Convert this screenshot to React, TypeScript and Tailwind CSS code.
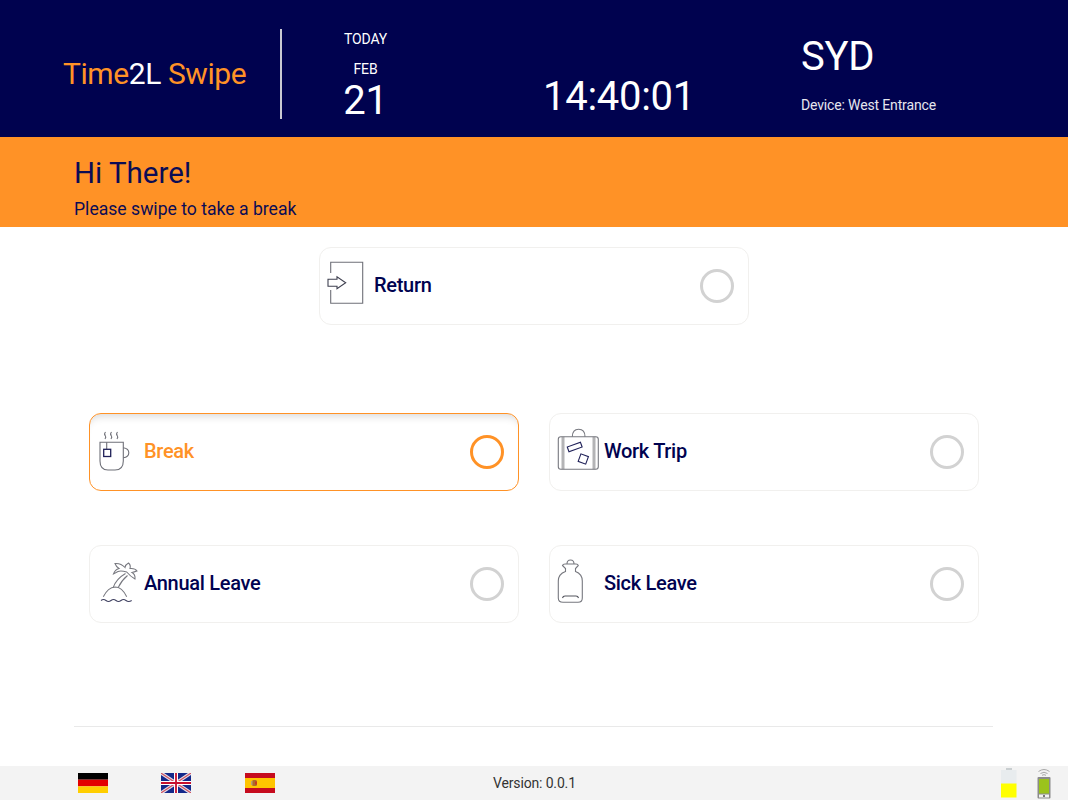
import React from "react";

function ReturnIcon() {
  return (
    <svg width="55" height="76" viewBox="0 0 55 76" fill="none" stroke="#6f7078" strokeWidth="1.1">
      <path d="M10.7 25V14.3H42.7V55.3H10.7V42" />
      <path d="M8 31.2H17V28.7L25.7 34.7L17 40.7V38.2H8Z" stroke="#3f4050" />
    </svg>
  );
}

function CupIcon() {
  return (
    <svg width="55" height="76" viewBox="0 0 55 76" fill="none" stroke="#6f7078" strokeWidth="1.1">
      <path d="M10 28.3H33.3V47Q33.3 56 25 56H18Q10 56 10 47Z" />
      <path d="M33.3 33.7Q38.8 34.5 38.8 38.7Q38.8 43 33.3 43.7" />
      <path d="M16.7 28.3V35.3" />
      <rect x="13.7" y="35.3" width="7" height="7.2" stroke="#1f2058" strokeWidth="1.3" />
      <path d="M15.5 18Q13.8 20 15.2 21.5Q16.5 23 15 25M21.5 18Q19.8 20 21.2 21.5Q22.5 23 21 25M27.5 18Q25.8 20 27.2 21.5Q28.5 23 27 25" />
    </svg>
  );
}

function CaseIcon() {
  return (
    <svg width="55" height="76" viewBox="0 0 55 76" fill="none" stroke="#77787f" strokeWidth="1.1">
      <path d="M13 22.7V55.3M44 22.7V55.3" stroke="#b4b4b6" strokeWidth="3" />
      <rect x="8.3" y="22.7" width="40" height="32.6" rx="2.5" />
      <path d="M22.3 22.7Q22.5 15.3 28.6 15.3Q35 15.3 35 22.7" />
      <rect x="17.7" y="30.5" width="14" height="5" transform="rotate(-20 24.7 33)" stroke="#1f2058" />
      <rect x="29.3" y="41" width="8" height="8" transform="rotate(20 33.3 45)" stroke="#1f2058" />
    </svg>
  );
}

function IslandIcon() {
  return (
    <svg width="55" height="76" viewBox="0 0 55 76" fill="none" stroke="#77787f" strokeWidth="1.05">
      <path d="M13.3 50.7Q18 41.5 25 41Q32 41 36.7 50.7" />
      <path d="M11 54.5Q13.5 52.5 16 54.5T21 54.5T26 54.5T31 54.5T36 54.5T41.7 54.5" stroke="#3f4060" />
      <path d="M23 41.8Q26 33 35.5 27.5M28.3 41.4Q31.5 34.5 37.5 29.5" />
      <path d="M36.7 26Q31 24.5 28 25.5L23.5 28Q25 23.5 29 22.5Q26 20.5 25 17.5Q31 17 35 21.5Q35.5 18.5 38.5 17Q41 19 40 22.5Q45 22 47 25Q44 26 42 26.5Q45.5 28.5 45 33Q40.5 30.5 36.7 26Z" />
    </svg>
  );
}

function BottleIcon() {
  return (
    <svg width="55" height="76" viewBox="0 0 55 76" fill="none" stroke="#77787f" strokeWidth="1.1">
      <path d="M15.5 25.5V22.5L12.5 19.5Q13 18 15 18H26Q28 18 28.3 19.5L25.5 22.5V25.5Q32.3 28 32.3 35V52Q32.3 56.3 28 56.3H13Q8.3 56.3 8.3 52V35Q8.3 28 15.5 25.5Z" />
      <path d="M17 18Q17 14 20.5 14Q24 14 24 18" />
      <path d="M12.5 52Q13 50 15 50H26Q28 50 28.5 52" stroke="#55565f" />
    </svg>
  );
}

function Card({ label, icon, active = false }: { label: string; icon: React.ReactNode; active?: boolean }) {
  return (
    <div
      className={`flex h-[78px] w-[430px] items-center rounded-xl border bg-white ${
        active
          ? "border-[#ff9226] shadow-[inset_0_9px_9px_-7px_rgba(0,0,0,0.16)]"
          : "border-[#f1f0ee]"
      }`}
    >
      <div className="h-[76px] w-[54px] shrink-0">{icon}</div>
      <span className={`-mt-[2px] text-[20px] font-medium tracking-[-0.3px] ${active ? "text-[#ff9226]" : "text-[#000250]"}`}>{label}</span>
      <div className={`-mt-px ml-auto mr-[14px] h-[34px] w-[34px] rounded-full border-[3px] ${active ? "border-[#ff9226]" : "border-[#d2d2d2]"}`} />
    </div>
  );
}

function Germany() {
  return (
    <svg width="30" height="20" viewBox="0 0 30 20">
      <rect width="30" height="6.67" fill="#000" />
      <rect y="6.67" width="30" height="6.67" fill="#e30000" />
      <rect y="13.33" width="30" height="6.67" fill="#ffce00" />
    </svg>
  );
}

function Britain() {
  return (
    <svg width="30" height="20" viewBox="0 0 30 20">
      <rect width="30" height="20" fill="#14288a" />
      <path d="M0 0L30 20M30 0L0 20" stroke="#e6e0ea" strokeWidth="3.4" />
      <path d="M0 0L30 20M30 0L0 20" stroke="#d0505e" strokeWidth="1.1" />
      <path d="M15 0V20M0 10H30" stroke="#fff" strokeWidth="4" />
      <path d="M15 0V20M0 10H30" stroke="#c8102e" strokeWidth="1.8" />
    </svg>
  );
}

function Spain() {
  return (
    <svg width="30" height="20" viewBox="0 0 30 20">
      <rect width="30" height="20" fill="#c60b1e" />
      <rect y="5" width="30" height="10" fill="#ffc400" />
      <rect x="7" y="7" width="5" height="6" rx="1.5" fill="#ad6b2a" />
      <rect x="6" y="8" width="1.5" height="4" fill="#b9a070" />
      <rect x="10" y="8.5" width="2" height="3" fill="#c8381e" />
    </svg>
  );
}

function Battery() {
  return (
    <svg width="16" height="30" viewBox="0 0 16 30">
      <rect x="5" y="0" width="6" height="2" fill="#c9ced0" />
      <rect x="0" y="2" width="15.5" height="14" fill="#e8ecee" />
      <rect x="0" y="15.5" width="15.5" height="14" fill="#ffff00" />
    </svg>
  );
}

function PhoneSignal() {
  return (
    <svg width="14" height="31" viewBox="0 0 14 31" fill="none">
      <path d="M1.5 3.5Q7 -0.5 12.5 3.5M3.5 5.5Q7 3 10.5 5.5M5 7.3Q7 6 9 7.3" stroke="#a8a8a8" strokeWidth="1" />
      <rect x="0.5" y="9" width="13" height="21.5" rx="1" fill="#8b8b8b" />
      <rect x="2" y="11" width="10" height="14.5" fill="#9bc31c" />
      <rect x="2" y="26.5" width="10" height="3" fill="#f2f2f2" />
      <rect x="6" y="27" width="2" height="2" fill="#777" />
    </svg>
  );
}

export default function App() {
  return (
    <div className="h-[800px] w-[1068px] overflow-hidden bg-white font-['Roboto',sans-serif]">
      <header className="flex h-[137px] items-start bg-[#00024f] text-white">
        <div className="flex h-full w-[280px] shrink-0 items-center pl-[63px] pt-[10px] text-[30px] leading-none tracking-[-0.42px] text-[#ff9226]">
          <span>
            Time<span className="text-white">2L</span> Swipe
          </span>
        </div>
        <div className="mt-[29px] h-[90px] w-[2px] shrink-0 bg-[#c9c9d2]" />
        <div className="flex w-[167px] shrink-0 flex-col items-center pt-[31px]">
          <div className="text-[14px] leading-[16px] tracking-[-0.15px]">TODAY</div>
          <div className="mt-[14px] text-[14px] leading-[16px] tracking-[-0.15px]">FEB</div>
          <div className="mt-[2px] text-[40px] leading-[44px] tracking-[-0.3px]">21</div>
        </div>
        <div className="ml-[94px] w-[258px] shrink-0 pt-[73px] text-[40px] leading-[48px] tracking-[-0.28px]">14:40:01</div>
        <div className="pt-[33px]">
          <div className="text-[40px] leading-[48px] tracking-[-0.3px]">SYD</div>
          <div className="mt-[16px] text-[14px] leading-[16px] tracking-[-0.15px] text-[#e6e6ee]">Device: West Entrance</div>
        </div>
      </header>

      <section className="h-[90px] bg-[#ff9226] pl-[74px] pt-[19px] text-[#0b0c55]">
        <div className="text-[29.5px] leading-[34px]">Hi There!</div>
        <div className="mt-[8px] text-[17.6px] leading-[22px]">Please swipe to take a break</div>
      </section>

      <main>
        <div className="flex justify-center pt-[20px]">
          <Card label="Return" icon={<ReturnIcon />} />
        </div>
        <div className="ml-[89px] mt-[88px] grid w-[890px] grid-cols-2 gap-x-[30px] gap-y-[54px]">
          <Card label="Break" icon={<CupIcon />} active />
          <Card label="Work Trip" icon={<CaseIcon />} />
          <Card label="Annual Leave" icon={<IslandIcon />} />
          <Card label="Sick Leave" icon={<BottleIcon />} />
        </div>
        <div className="ml-[74px] mt-[103px] h-px w-[919px] bg-[#e9e9e9]" />
      </main>

      <footer className="mt-[39px] flex h-[34px] items-center bg-[#f3f3f3] pl-[78px] pr-[17px]">
        <Germany />
        <div className="ml-[53px]"><Britain /></div>
        <div className="ml-[54px]"><Spain /></div>
        <span className="ml-[218px] text-[14px] tracking-[-0.15px] text-[#333]">Version: 0.0.1</span>
        <div className="ml-auto flex items-center gap-[20px]">
          <Battery />
          <PhoneSignal />
        </div>
      </footer>
    </div>
  );
}
